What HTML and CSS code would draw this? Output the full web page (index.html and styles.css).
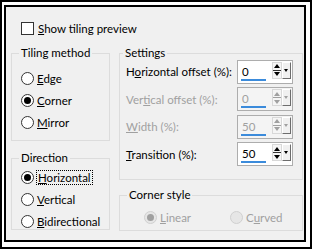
FILE: index.html
```html
<!DOCTYPE html>
<html lang="en">
<head>
    <meta charset="UTF-8" />
    <title>Tiling</title>
    <link rel="stylesheet" href="styles.css">
</head>
<body>
    <div class="window">
        <div class="dialog">
            <label class="check"><span class="box"></span><span><u>S</u>how tiling preview</span></label>

            <div class="columns">
                <div class="col col-left">
                    <fieldset class="group tiling">
                        <legend>Tiling method</legend>
                        <label class="radio"><span class="dot"></span><span><u>E</u>dge</span></label>
                        <label class="radio"><span class="dot on"></span><span><u>C</u>orner</span></label>
                        <label class="radio"><span class="dot"></span><span><u>M</u>irror</span></label>
                    </fieldset>

                    <fieldset class="group direction">
                        <legend>Direction</legend>
                        <label class="radio"><span class="dot on"></span><span class="focus"><u>H</u>orizontal</span></label>
                        <label class="radio"><span class="dot"></span><span><u>V</u>ertical</span></label>
                        <label class="radio"><span class="dot"></span><span><u>B</u>idirectional</span></label>
                    </fieldset>
                </div>

                <div class="col col-right">
                    <fieldset class="group settings">
                        <legend>Settings</legend>
                        <div class="row">
                            <span class="label">H<u>o</u>rizontal offset (%):</span>
                            <div class="spin">
                                <div class="value">0</div>
                                <div class="updown"><span class="up"></span><span class="down"></span></div>
                                <div class="drop"><span></span></div>
                            </div>
                        </div>
                        <div class="row disabled">
                            <span class="label">Ver<u>t</u>ical offset (%):</span>
                            <div class="spin">
                                <div class="value">0</div>
                                <div class="updown"><span class="up"></span><span class="down"></span></div>
                                <div class="drop"><span></span></div>
                            </div>
                        </div>
                        <div class="row disabled">
                            <span class="label"><u>W</u>idth (%):</span>
                            <div class="spin">
                                <div class="value">50</div>
                                <div class="updown"><span class="up"></span><span class="down"></span></div>
                                <div class="drop"><span></span></div>
                            </div>
                        </div>
                        <div class="row">
                            <span class="label"><u>T</u>ransition (%):</span>
                            <div class="spin">
                                <div class="value">50</div>
                                <div class="updown"><span class="up"></span><span class="down"></span></div>
                                <div class="drop"><span></span></div>
                            </div>
                        </div>
                    </fieldset>

                    <fieldset class="group corner">
                        <legend>Corner style</legend>
                        <div class="radios disabled">
                            <label class="radio"><span class="dot on"></span><span><u>L</u>inear</span></label>
                            <label class="radio"><span class="dot"></span><span>C<u>u</u>rved</span></label>
                        </div>
                    </fieldset>
                </div>
            </div>
        </div>
    </div>
</body>
</html>
```

FILE: styles.css
```css
* {
    margin: 0;
    padding: 0;
    box-sizing: border-box;
}

body {
    width: 312px;
    height: 249px;
    background: #ffffff;
    font-family: 'Lato', sans-serif;
    font-size: 11.5px;
    color: #000000;
}

.window {
    width: 312px;
    height: 249px;
    border: 2px solid #000000;
    padding: 3px 4px 5px 2px;
}

.dialog {
    height: 100%;
    border: 2px solid #000000;
    background: #f0f0f0;
    padding: 15px 0 0 5px;
}

u {
    text-decoration: underline;
    text-underline-offset: 1px;
}

/* checkbox */
.check {
    display: flex;
    align-items: center;
    gap: 4px;
    margin-left: 10px;
    height: 13px;
}

.check .box {
    width: 13px;
    height: 13px;
    border: 1px solid #333333;
    background: #ffffff;
}

.columns {
    display: flex;
    gap: 9px;
    margin-top: 11px;
}

.col {
    display: flex;
    flex-direction: column;
}

.col-left {
    width: 99px;
    gap: 10px;
}

.col-right {
    width: 184px;
    gap: 8px;
}

/* group boxes */
.group {
    border: 1px solid #dcdcdc;
    padding: 0 6px;
}

.group legend {
    padding: 0 2px;
    margin-left: 1px;
    line-height: 14px;
}

.tiling {
    height: 95px;
    padding-top: 7px;
}

.direction {
    height: 79px;
    padding-top: 1px;
}

.settings {
    height: 134px;
    padding: 0 9px 0 6px;
}

.settings legend {
    margin-left: -3px;
    margin-bottom: -2px;
}

.corner {
    height: 43px;
    padding-top: 4px;
}

/* radios */
.radio {
    display: flex;
    align-items: center;
    gap: 3px;
    height: 22px;
    margin-left: 3px;
}

.dot {
    width: 13px;
    height: 13px;
    border-radius: 50%;
    border: 1px solid #333333;
    background: #ffffff;
    display: flex;
    align-items: center;
    justify-content: center;
}

.dot.on::after {
    content: "";
    width: 7px;
    height: 7px;
    border-radius: 50%;
    background: #000000;
}

.focus {
    outline: 1px dotted #000000;
    outline-offset: 0;
    padding: 0 1px;
}

.radios {
    display: flex;
    gap: 36px;
    margin-left: 15px;
}

.radios.disabled {
    color: #a0a0a0;
}

.radios.disabled .dot {
    border-color: #d0d0d0;
    background: #e6e6e6;
}

.radios.disabled .dot.on::after {
    background: #a0a0a0;
}

/* spin rows */
.row {
    display: flex;
    align-items: center;
    justify-content: space-between;
    height: 27.5px;
}

.row.disabled .label {
    color: #a0a0a0;
}

.spin {
    display: flex;
    align-items: center;
    width: 56px;
    height: 24px;
    border: 1px solid #adadad;
    background: #ffffff;
    padding: 0 1px 0 4px;
}

.value {
    width: 28px;
    height: 100%;
    padding-top: 4px;
    border-bottom: 3px solid #ffffff;
    position: relative;
}

.value::after {
    content: "";
    position: absolute;
    left: -1px;
    right: 2px;
    bottom: -1px;
    height: 2px;
    background: #3b8bdb;
}

.row.disabled .spin {
    background: #f4f4f4;
}

.row.disabled .value {
    color: #a0a0a0;
    border-bottom-color: #f4f4f4;
}

.updown {
    display: flex;
    flex-direction: column;
    width: 11px;
    height: 17px;
    margin-left: 4px;
    margin-top: -3px;
    border: 1px solid #d8d8d8;
    background: #f5f5f5;
}

.updown span {
    flex: 1;
    display: flex;
    align-items: center;
    justify-content: center;
}

.updown .up {
    border-bottom: 1px solid #333333;
}

.updown .up::after {
    content: "";
    border: 3px solid transparent;
    border-bottom: 4px solid #000000;
    border-top: 0;
}

.updown .down::after {
    content: "";
    border: 3px solid transparent;
    border-top: 4px solid #000000;
    border-bottom: 0;
}

.drop {
    width: 10px;
    height: 17px;
    margin-top: -3px;
    border: 1px solid #ffffff;
    border-right-color: #6d6d6d;
    border-bottom-color: #6d6d6d;
    background: #f0f0f0;
    display: flex;
    align-items: center;
    justify-content: center;
}

.drop span {
    border: 2px solid transparent;
    border-top: 3px solid #000000;
    border-bottom: 0;
}

.row.disabled .updown .up::after {
    border-bottom-color: #a0a0a0;
}

.row.disabled .updown .down::after,
.row.disabled .drop span {
    border-top-color: #a0a0a0;
}

.row.disabled .updown .up {
    border-bottom-color: #a0a0a0;
}
```
